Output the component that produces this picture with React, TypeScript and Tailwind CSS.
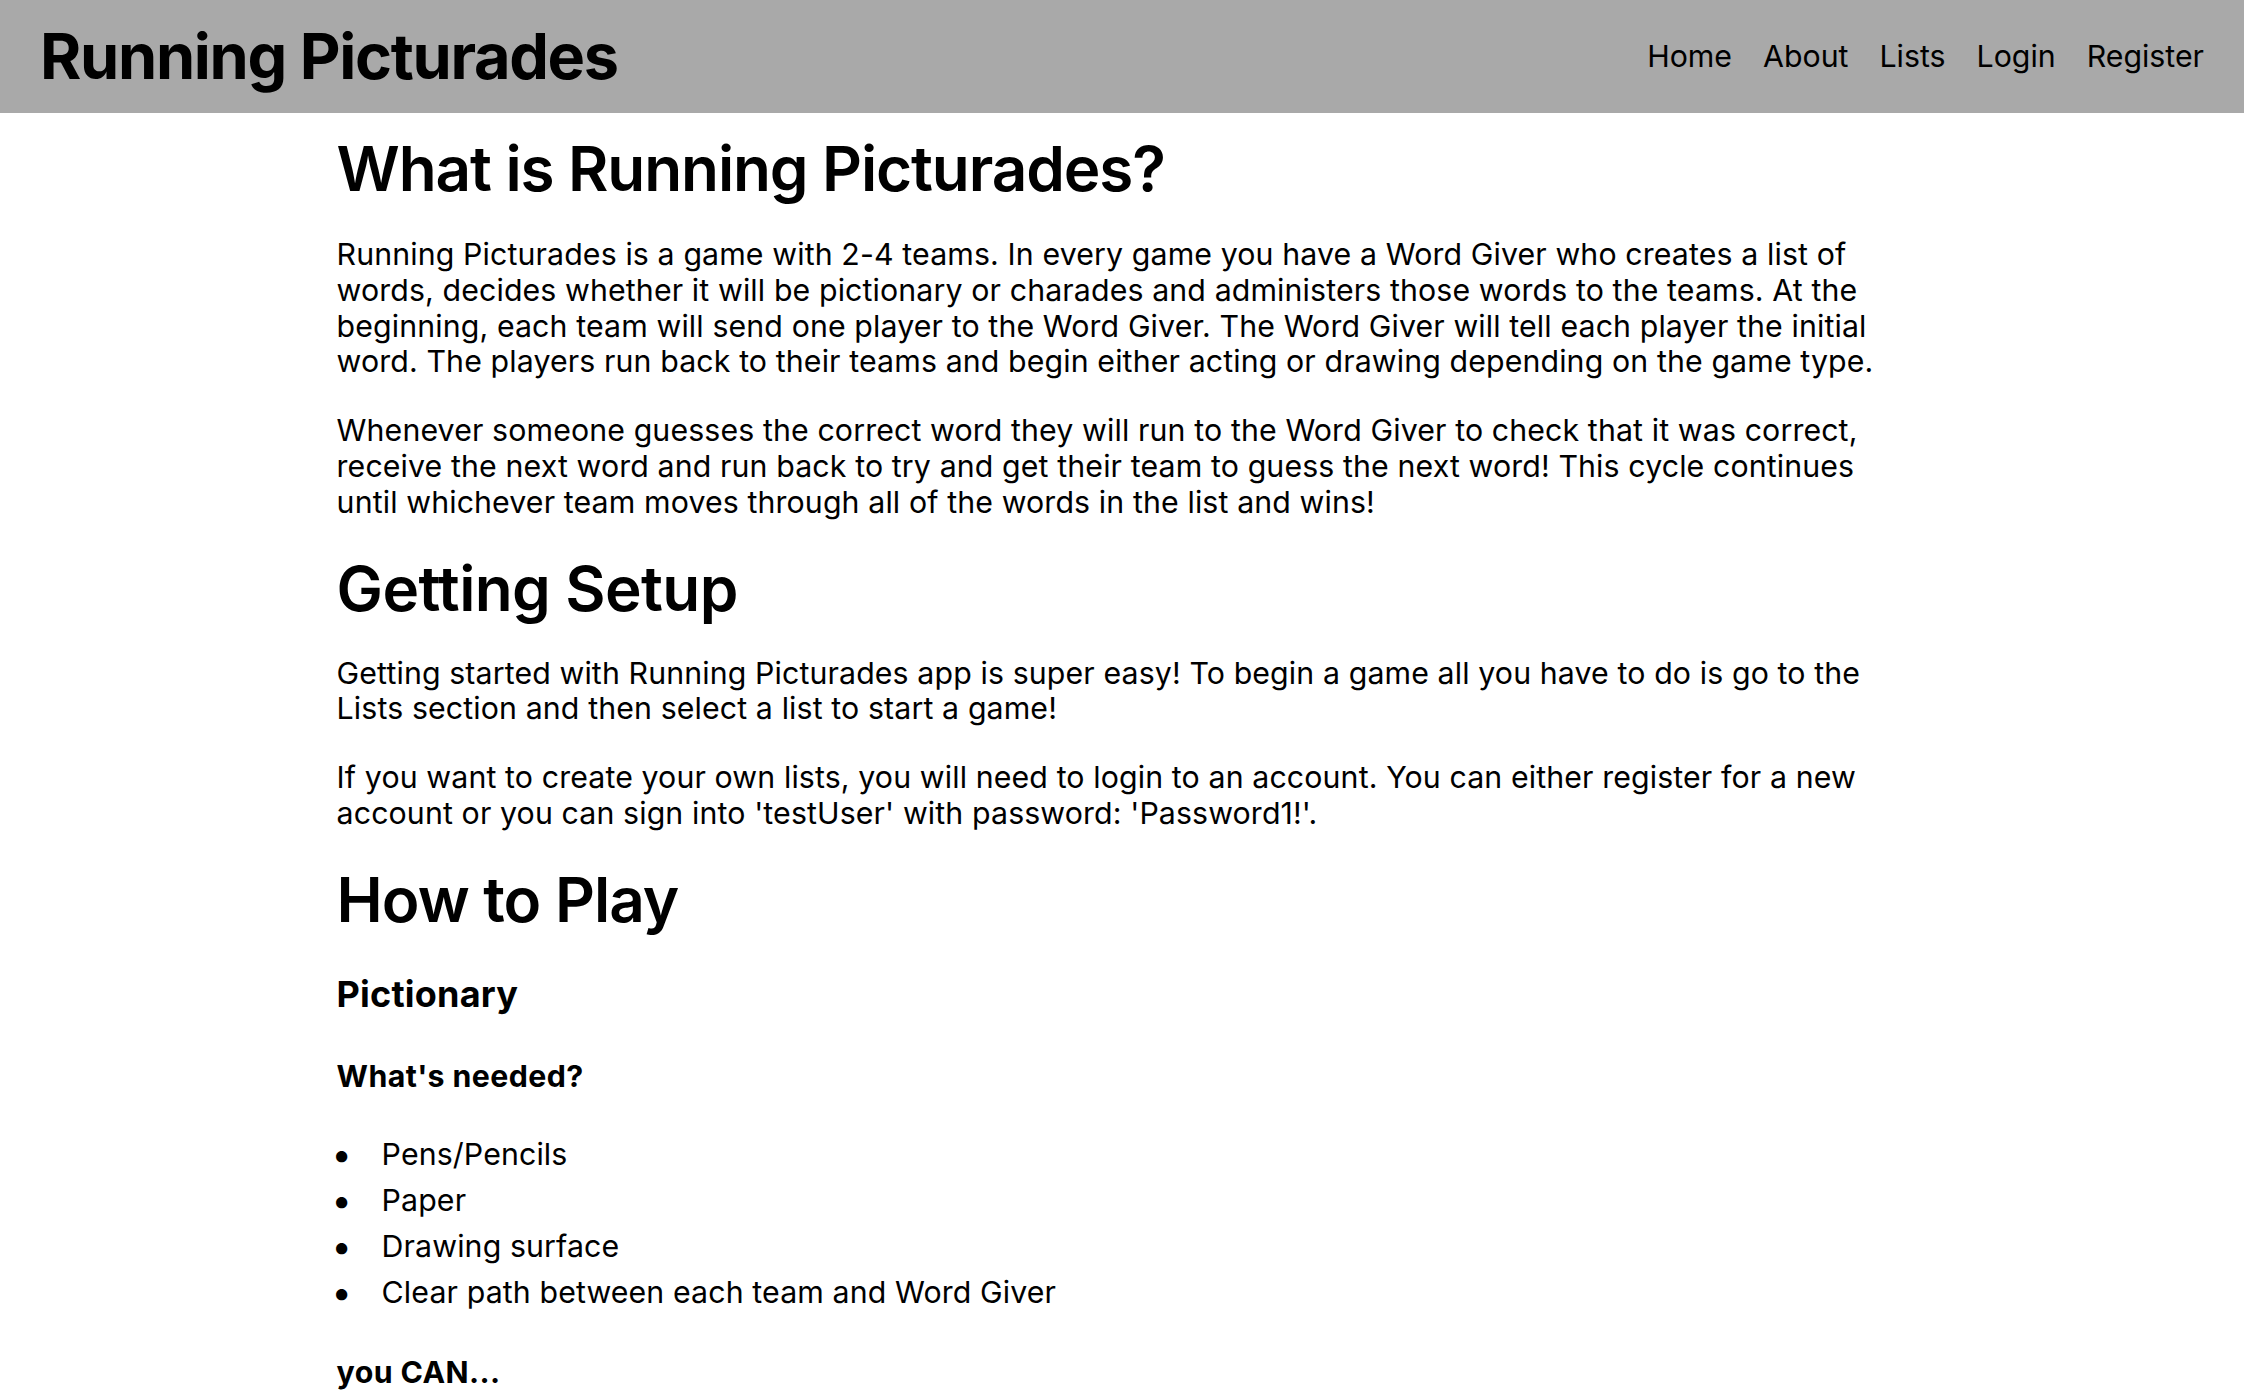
const navLinks = ['Home', 'About', 'Lists', 'Login', 'Register'];

const needed = [
  'Pens/Pencils',
  'Paper',
  'Drawing surface',
  'Clear path between each team and Word Giver',
];

export default function App() {
  return (
    <div className="min-h-screen bg-white text-black font-['Inter','Liberation_Sans',sans-serif]">
      <header className="h-[113px] bg-[#a9a9a9] px-[40px] flex items-center justify-between">
        <h1 className="text-[63px] font-bold leading-none tracking-[-1.3px]">Running Picturades</h1>
        <nav className="flex items-center gap-[31px] text-[30.3px]">
          {navLinks.map((link) => (
            <a key={link} href="#">
              {link}
            </a>
          ))}
        </nav>
      </header>

      <main className="w-[70%] mx-auto flex flex-col pb-10 tracking-[0.12px]">
        <h2 className="mt-[16px] text-[62px] leading-[80px] font-semibold tracking-[-1.1px]">What is Running Picturades?</h2>
        <p className="mt-[28px] text-[30.3px] leading-[35.8px]">
          Running Picturades is a game with 2-4 teams. In every game you have a Word Giver who creates a list of
          words, decides whether it will be pictionary or charades and administers those words to the teams. At the
          beginning, each team will send one player to the Word Giver. The Word Giver will tell each player the initial
          word. The players run back to their teams and begin either acting or drawing depending on the game type.
        </p>
        <p className="mt-[33px] text-[30.3px] leading-[35.8px]">
          Whenever someone guesses the correct word they will run to the Word Giver to check that it was correct,
          receive the next word and run back to try and get their team to guess the next word! This cycle continues
          until whichever team moves through all of the words in the list and wins!
        </p>

        <h2 className="mt-[28px] text-[62px] leading-[80px] font-semibold tracking-[-0.6px]">Getting Setup</h2>
        <p className="mt-[27px] text-[30.3px] leading-[35.8px]">
          Getting started with Running Picturades app is super easy! To begin a game all you have to do is go to the
          Lists section and then select a list to start a game!
        </p>
        <p className="mt-[33px] text-[30.3px] leading-[35.8px]">
          If you want to create your own lists, you will need to login to an account. You can either register for a new
          account or you can sign into 'testUser' with password: 'Password1!'.
        </p>

        <h2 className="mt-[28px] text-[62px] leading-[80px] font-semibold tracking-[-1px]">How to Play</h2>
        <h3 className="mt-[33px] text-[36px] leading-[42px] font-bold tracking-[0.2px]">Pictionary</h3>
        <h4 className="mt-[43px] text-[30.3px] leading-[36px] font-bold tracking-[0.4px]">What's needed?</h4>
        <ul className="mt-[37px]">
          {needed.map((item) => (
            <li key={item} className="flex text-[30.3px] leading-[46px]">
              <span className="ml-[-5px] w-[50px] shrink-0 text-[36px]">•</span>
              <span>{item}</span>
            </li>
          ))}
        </ul>
        <h4 className="mt-[39px] text-[30.3px] leading-[36px] font-bold tracking-[0.4px]">you CAN...</h4>
      </main>
    </div>
  );
}
